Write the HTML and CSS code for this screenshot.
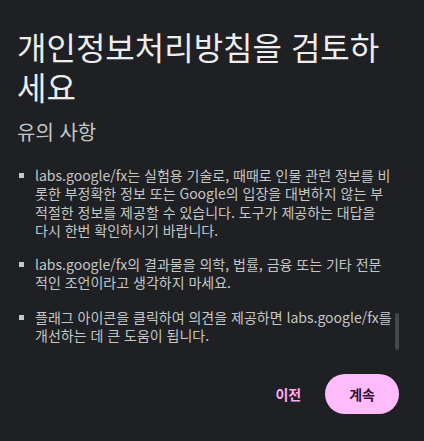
FILE: index.html
```html
<!DOCTYPE html>
<html lang="ko">
<head>
<meta charset="utf-8">
<link rel="stylesheet" href="styles.css">
</head>
<body>
<div class="dialog">
  <h1 class="title">개인정보처리방침을 검토하세요</h1>
  <h2 class="subtitle">유의 사항</h2>
  <div class="scroll">
    <ul class="notes">
      <li class="note note-narrow">labs.google/fx는 실험용 기술로, 때때로 인물 관련 정보를 비롯한 부정확한 정보 또는 Google의 입장을 대변하지 않는 부적절한 정보를 제공할 수 있습니다. 도구가 제공하는 대답을 다시 한번 확인하시기 바랍니다.</li>
      <li class="note">labs.google/fx의 결과물을 의학, 법률, 금융 또는 기타 전문적인 조언이라고 생각하지 마세요.</li>
      <li class="note">플래그 아이콘을 클릭하여 의견을 제공하면 labs.google/fx를 개선하는 데 큰 도움이 됩니다.</li>
    </ul>
    <div class="thumb"></div>
  </div>
  <div class="actions">
    <button class="btn-text">이전</button>
    <button class="btn-filled">계속</button>
  </div>
</div>
</body>
</html>
```

FILE: styles.css
```css
html, body {
  margin: 0;
  padding: 0;
  background: #1f2024;
}
body {
  font-family: "Noto Sans CJK KR", "Noto Sans", sans-serif;
  width: 424px;
  height: 441px;
  overflow: hidden;
}
.dialog {
  padding: 26px 25px 0 17px;
  display: flex;
  flex-direction: column;
}
.title {
  margin: 0;
  font-size: 32px;
  line-height: 40px;
  font-weight: 400;
  color: #ededed;
}
.subtitle {
  margin: 12px 0 0;
  font-size: 20px;
  line-height: 28px;
  font-weight: 400;
  color: #c4c7c5;
}
.scroll {
  position: relative;
  margin-top: 20px;
}
.notes {
  list-style: none;
  margin: 0;
  padding: 0 0 0 18px;
  width: 358px;
  display: flex;
  flex-direction: column;
  gap: 16px;
}
.note {
  position: relative;
  font-size: 14px;
  line-height: 18.3px;
  color: #c4c7c5;
}
.note-narrow {
  padding-right: 2px;
}
.note::before {
  content: "";
  position: absolute;
  left: -16px;
  top: 7px;
  width: 5px;
  height: 5px;
  background: #c4c7c5;
}
.thumb {
  position: absolute;
  right: 0;
  top: 147px;
  width: 4px;
  height: 37px;
  border-radius: 2px;
  background: #46474b;
}
.actions {
  margin-top: 30px;
  display: flex;
  justify-content: flex-end;
  align-items: center;
  gap: 12px;
}
.btn-text, .btn-filled {
  font-family: "Noto Sans CJK KR", "Noto Sans", sans-serif;
  font-size: 14px;
  font-weight: 700;
  border: none;
  height: 40px;
  border-radius: 20px;
  cursor: pointer;
}
.btn-text {
  background: transparent;
  color: #ffabf6;
  padding: 0 12px;
}
.btn-filled {
  background: #ffbbfa;
  color: #33102f;
  padding: 0 24px;
}
```
